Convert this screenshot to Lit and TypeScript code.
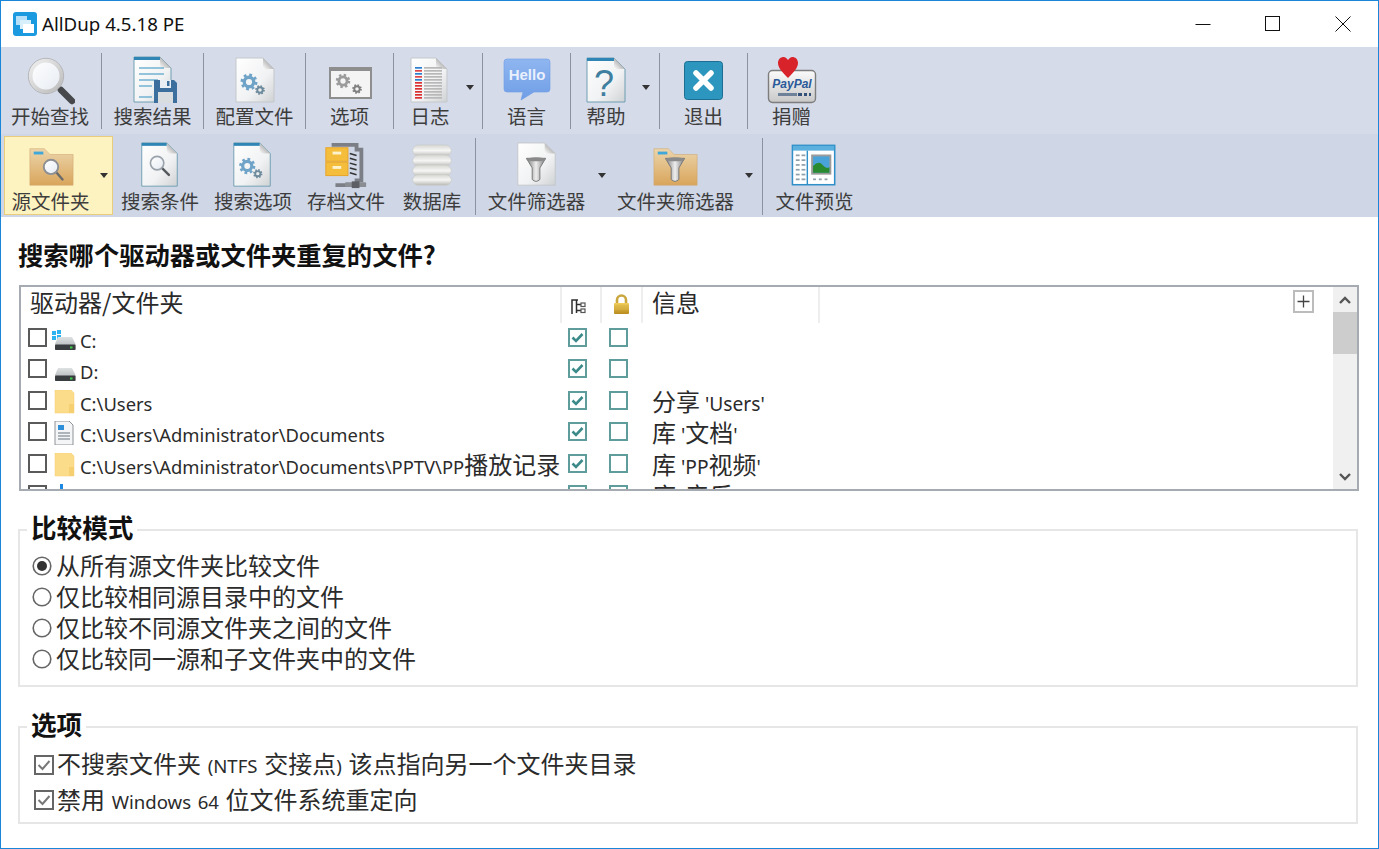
import { LitElement, html, css, svg } from "lit";
import { customElement } from "lit/decorators.js";

const defs = svg`<defs>
  <linearGradient id="pg" x1="0" y1="0" x2="1" y2="1"><stop offset="0" stop-color="#ffffff"/><stop offset="0.6" stop-color="#f1f2f3"/><stop offset="1" stop-color="#cfd2d4"/></linearGradient>
  <linearGradient id="fold" x1="0" y1="1" x2="1" y2="0"><stop offset="0" stop-color="#fff"/><stop offset="1" stop-color="#777"/></linearGradient>
  <linearGradient id="tan" x1="0" y1="0" x2="0" y2="1"><stop offset="0" stop-color="#ecd5ab"/><stop offset="1" stop-color="#d9a55b"/></linearGradient>
  <linearGradient id="glass" x1="0" y1="0" x2="1" y2="1"><stop offset="0" stop-color="#ffffff"/><stop offset="1" stop-color="#e6ebf2"/></linearGradient>
  <linearGradient id="ring" x1="0" y1="0" x2="1" y2="1"><stop offset="0" stop-color="#efefef"/><stop offset="1" stop-color="#bcbcbc"/></linearGradient>
  <linearGradient id="hello" x1="0" y1="0" x2="0" y2="1"><stop offset="0" stop-color="#8fb6f0"/><stop offset="1" stop-color="#6f9de6"/></linearGradient>
  <linearGradient id="disk" x1="0" y1="0" x2="0" y2="1"><stop offset="0" stop-color="#d6d6d3"/><stop offset="0.5" stop-color="#f6f6f5"/><stop offset="1" stop-color="#b9b9b6"/></linearGradient>
  <linearGradient id="gold" x1="0" y1="0" x2="0" y2="1"><stop offset="0" stop-color="#f0cf5a"/><stop offset="1" stop-color="#b98a1d"/></linearGradient>
  <linearGradient id="pp" x1="0" y1="0" x2="0" y2="1"><stop offset="0" stop-color="#fbfbfb"/><stop offset="1" stop-color="#c8c8c8"/></linearGradient>
  <linearGradient id="fun" x1="0" y1="0" x2="1" y2="0"><stop offset="0" stop-color="#777"/><stop offset="0.5" stop-color="#eee"/><stop offset="1" stop-color="#777"/></linearGradient>
  <linearGradient id="drv" x1="0" y1="0" x2="0" y2="1"><stop offset="0" stop-color="#dfe2e3"/><stop offset="1" stop-color="#a9adaf"/></linearGradient>
</defs>`;

const doc = (x: number, y: number, w: number, h: number, band = false) => {
  const f = 11;
  return svg`<path d="M${x} ${y}H${x + w - f}L${x + w} ${y + f}V${y + h}H${x}Z" fill="url(#pg)" stroke="${band ? "#6f9fb2" : "#c4c7cb"}" stroke-width="1"/>
  <path d="M${x + w - f} ${y}V${y + f}H${x + w}Z" fill="url(#fold)"/>
  ${band ? svg`<rect x="${x}" y="${y}" width="${w - f}" height="3" fill="#2f86b5"/>` : ""}`;
};

const gear = (cx: number, cy: number, r: number, c: string) => {
  const circ = 2 * Math.PI * r;
  const d = circ / 16;
  return svg`<circle cx="${cx}" cy="${cy}" r="${r}" fill="none" stroke="${c}" stroke-width="${r * 0.42}" stroke-dasharray="${d} ${d}"/>
  <circle cx="${cx}" cy="${cy}" r="${r * 0.68}" fill="none" stroke="${c}" stroke-width="${r * 0.48}"/>`;
};

const lens = (cx: number, cy: number, r: number) => svg`
  <line x1="${cx + r * 0.7}" y1="${cy + r * 0.7}" x2="${cx + r * 1.75}" y2="${cy + r * 1.75}" stroke="#55585c" stroke-width="${r * 0.36}" stroke-linecap="round"/>
  <circle cx="${cx}" cy="${cy}" r="${r}" fill="url(#glass)" stroke="#9aa3ab" stroke-width="${r * 0.24}"/>`;

const funnel = (cx: number, y: number) => svg`
  <path d="M${cx - 10} ${y}H${cx + 10}L${cx + 4} ${y + 10}V${y + 22}Q${cx} ${y + 26} ${cx - 4} ${y + 22}V${y + 10}Z" fill="url(#fun)" stroke="#777" stroke-width="1"/>
  <ellipse cx="${cx}" cy="${y + 1}" rx="10" ry="2" fill="#8a8a8a"/>`;

const folder = (x: number, y: number, w: number, h: number) => svg`
  <path d="M${x} ${y}H${x + 15}L${x + 21} ${y + 6}H${x + w}V${y + h}H${x}Z" fill="url(#tan)" stroke="#d0a870" stroke-width="0.6"/>
  <rect x="${x + 4}" y="${y + 3}" width="10" height="3" fill="#3fa8d8"/>`;

const icons: Record<string, unknown> = {
  search: svg`<line x1="31" y1="31" x2="36" y2="36" stroke="#9a9a9a" stroke-width="3"/><line x1="36" y1="35" x2="47" y2="46" stroke="#46484b" stroke-width="6.500" stroke-linecap="round"/><circle cx="21" cy="21" r="15.500" fill="url(#glass)" stroke="url(#ring)" stroke-width="4"/><circle cx="21" cy="21" r="17.700" fill="none" stroke="#a8a8a8" stroke-width="0.7"/>`,
  results: svg`${doc(6, 2, 37, 45, true)}
    <g stroke="#5ba7cc" stroke-width="1.3"><line x1="11" y1="13" x2="36" y2="13"/><line x1="11" y1="19" x2="36" y2="19"/><line x1="11" y1="25" x2="30" y2="25"/><line x1="11" y1="31" x2="24" y2="31"/><line x1="11" y1="42" x2="24" y2="42"/></g>
    <path d="M26 25H46L49 28V48H26Z" fill="#3d6f9e"/><rect x="32" y="25" width="11" height="8" fill="#e8eef3"/><rect x="39" y="26" width="2.5" height="5" fill="#3d6f9e"/><rect x="30" y="37" width="15" height="11" fill="#d9dde0"/>`,
  config: svg`${doc(6, 3, 38, 44)}${gear(19, 27, 7, "#6fa3c8")}${gear(30, 35, 4, "#6c8a9c")}`,
  options: svg`<rect x="5" y="13" width="41" height="30" fill="#f4f4f4" stroke="#8e8e8e" stroke-width="2"/><rect x="5" y="13" width="41" height="3" fill="#8e8e8e"/>${gear(18, 26, 6, "#9b9b9b")}${gear(32, 34, 4, "#7f7f7f")}`,
  log: svg`${doc(6, 3, 36, 44)}
    ${[12, 15, 18, 21, 24, 27, 30, 33, 36, 39, 42].map((y, i) => svg`<rect x="10" y="${y}" width="7" height="1.7" fill="${i < 5 && i % 2 === 0 ? "#2c7fd0" : i < 5 ? "#e04848" : "#dc2f2f"}"/><rect x="19" y="${y}" width="18" height="1.7" fill="#b8b8b8"/>`)}`,
  hello: svg`<path d="M5 4H45Q48 4 48 7V34Q48 37 45 37H32L19 45L21 37H5Q2 37 2 34V7Q2 4 5 4Z" fill="url(#hello)" stroke="#6f9de6" stroke-width="0.6"/><text x="25" y="25" text-anchor="middle" class="svgt" font-size="15" font-weight="700" fill="#e9f0fd">Hello</text>`,
  help: svg`${doc(6, 3, 38, 44, true)}<text x="23" y="41" text-anchor="middle" class="svgt" font-size="36" fill="#3f7f9f">?</text>`,
  exit: svg`<rect x="5.5" y="6.5" width="38" height="38" rx="3" fill="#2c96bf" stroke="#1c6f90"/><path d="M17 18L32 33M32 18L17 33" stroke="#fff" stroke-width="5.5" stroke-linecap="round"/>`,
  paypal: svg`<rect x="1.5" y="15.5" width="47" height="32" rx="4" fill="url(#pp)" stroke="#7d7d7d" stroke-width="1.4"/>
    <text x="25" y="33" text-anchor="middle" class="svgt" font-size="12" font-weight="700" font-style="italic" fill="#2a5a9a">PayPal</text>
    <rect x="11" y="38" width="19" height="3" fill="#6d8299"/><rect x="31" y="38" width="4" height="3" fill="#33507a"/><rect x="37" y="38" width="3" height="3" fill="#33507a"/><rect x="42" y="38" width="2" height="3" fill="#33507a"/>
    <path d="M21 23C14 16 11 12 11 8C11 4 14 2 16.500 2C18.500 2 20 3.500 21 5C22 3.500 23.500 2 25.500 2C28 2 31 4 31 8C31 12 28 16 21 23Z" fill="#d8232a"/>`,
  srcFolder: svg`${folder(3, 7, 45, 38)}<line x1="30" y1="31" x2="37" y2="39" stroke="#6a6a6a" stroke-width="2.5" stroke-linecap="round"/><circle cx="25" cy="26" r="7.5" fill="url(#glass)" stroke="#8c8f93" stroke-width="2"/>`,
  criteria: svg`${doc(6, 1, 37, 45, true)}${lens(22, 22, 7)}`,
  searchOpt: svg`${doc(5, 1, 38, 45, true)}${gear(19, 25, 7, "#6fa3c8")}${gear(30, 33, 4, "#6c8a9c")}`,
  archive: svg`<path d="M10 3H36V8H41V40H36V45H14" fill="none" stroke="#7c7f85" stroke-width="4"/>
    <g stroke="#333" stroke-width="1.6"><line x1="29" y1="12" x2="36" y2="14"/><line x1="29" y1="17" x2="36" y2="19"/><line x1="29" y1="22" x2="36" y2="24"/><line x1="29" y1="27" x2="36" y2="29"/><line x1="29" y1="32" x2="36" y2="34"/></g>
    <rect x="4" y="6" width="23" height="14" fill="#f4be3c" stroke="#e9a425"/><rect x="4" y="21" width="23" height="14" fill="#f4be3c" stroke="#e9a425"/>
    <rect x="11" y="10" width="9" height="3" fill="#fff3cd"/><rect x="11" y="25" width="9" height="3" fill="#fff3cd"/>
    <rect x="24" y="42" width="22" height="5" rx="1" fill="#8a8d92"/><rect x="31" y="41" width="8" height="7" fill="#5c5f64"/>`,
  db: svg`<rect x="5" y="3" width="40" height="12" rx="6" fill="url(#disk)" stroke="#c9c9c6" stroke-width="0.6"/><rect x="5" y="13.500" width="40" height="12" rx="6" fill="url(#disk)" stroke="#c9c9c6" stroke-width="0.6"/><rect x="5" y="24" width="40" height="12" rx="6" fill="url(#disk)" stroke="#c9c9c6" stroke-width="0.6"/><rect x="5" y="34" width="40" height="11" rx="5.500" fill="url(#disk)" stroke="#c9c9c6" stroke-width="0.6"/>`,
  fileFilter: svg`${doc(5, 1, 39, 44)}${funnel(24, 17)}`,
  folderFilter: svg`${folder(2, 7, 45, 38)}${funnel(24, 17)}`,
  preview: svg`<rect x="1.5" y="3.5" width="44" height="41" fill="#fff" stroke="#2f8fc8" stroke-width="1.6"/><rect x="2" y="4" width="43" height="5" fill="#5cb0de"/><line x1="17" y1="9" x2="17" y2="44" stroke="#2f8fc8" stroke-width="1.5"/>
    ${[13, 18, 23, 28, 33, 38].map((y) => svg`<rect x="5" y="${y}" width="4" height="1.800" fill="#8fa0ad"/><rect x="11" y="${y}" width="4" height="1.800" fill="#8fa0ad"/>`)}
    <rect x="21" y="13" width="21" height="21" fill="#9b9b9b"/><rect x="23" y="15" width="17" height="17" fill="#4aa3d8"/><path d="M23 32V25Q29 19 33 24T40 26V32Z" fill="#2a8a2f"/>
    <rect x="23" y="38" width="3" height="1.800" fill="#8fa0ad"/><rect x="29" y="38" width="3" height="1.800" fill="#8fa0ad"/><rect x="35" y="38" width="3" height="1.800" fill="#8fa0ad"/>`,
};

type Btn = { label: string; icon: string; w: number; dropW?: number; dropMl?: number; active?: boolean; sepAfter?: boolean; sepMl?: number };

const row1: Btn[] = [
  { label: "开始查找", icon: "search", w: 98, sepAfter: true, sepMl: 2 },
  { label: "搜索结果", icon: "results", w: 101, sepAfter: true },
  { label: "配置文件", icon: "config", w: 101, sepAfter: true },
  { label: "选项", icon: "options", w: 87, sepAfter: true },
  { label: "日志", icon: "log", w: 72, dropW: 16, dropMl: 0, sepAfter: true },
  { label: "语言", icon: "hello", w: 87, sepAfter: true },
  { label: "帮助", icon: "help", w: 70, dropW: 18, dropMl: 1, sepAfter: true },
  { label: "退出", icon: "exit", w: 87, sepAfter: true },
  { label: "捐赠", icon: "paypal", w: 87 },
];
const row2: Btn[] = [
  { label: "源文件夹", icon: "srcFolder", w: 92, dropW: 17, dropMl: 4, active: true },
  { label: "搜索条件", icon: "criteria", w: 94 },
  { label: "搜索选项", icon: "searchOpt", w: 92 },
  { label: "存档文件", icon: "archive", w: 94 },
  { label: "数据库", icon: "db", w: 78, sepAfter: true, sepMl: 4 },
  { label: "文件筛选器", icon: "fileFilter", w: 120, dropW: 16, dropMl: 2 },
  { label: "文件夹筛选器", icon: "folderFilter", w: 126, dropW: 24, dropMl: 7, sepAfter: true },
  { label: "文件预览", icon: "preview", w: 103 },
];

const driveBody = svg`<path d="M6 10H20L23.500 17V23H3V17Z" fill="url(#drv)"/><rect x="3" y="17.500" width="20.500" height="5.500" rx="1" fill="#3a3d40"/><rect x="18" y="19.500" width="2.500" height="2" fill="#39d04a"/>`;
const tallFolder = svg`<path d="M3 0H19L22 3V23H3Z" fill="#fbdc8a" stroke="#f5cf70" stroke-width="0.5"/><rect x="17" y="14" width="5" height="9" fill="#f5cf70"/>`;
const rowIcons: Record<string, unknown> = {
  c: svg`<g fill="#2db4f0"><rect x="0" y="4" width="4" height="4"/><rect x="5" y="3" width="4" height="4"/><rect x="0" y="9" width="4" height="4"/><rect x="5" y="8" width="4" height="4"/></g>${driveBody}`,
  d: driveBody,
  folder: tallFolder,
  docs: svg`<path d="M3 0H17L21 4V24H3Z" fill="#f4f5f6" stroke="#8e9296"/><rect x="6" y="4" width="6" height="5" fill="#2f8fd8"/><g stroke="#7e8a94" stroke-width="1.200"><line x1="6" y1="12" x2="18" y2="12"/><line x1="6" y1="15" x2="18" y2="15"/><line x1="6" y1="18" x2="18" y2="18"/></g>`,
  music: svg`<path d="M11 0V16A4 4 0 1 1 8 12V0Z" fill="#1e88e5"/>`,
};

type Row = { icon: string; path: string; info?: string };
const rows: Row[] = [
  { icon: "c", path: "C:" },
  { icon: "d", path: "D:" },
  { icon: "folder", path: "C:\\Users", info: "分享 'Users'" },
  { icon: "docs", path: "C:\\Users\\Administrator\\Documents", info: "库 '文档'" },
  { icon: "folder", path: "C:\\Users\\Administrator\\Documents\\PPTV\\PP播放记录", info: "库 'PP视频'" },
  { icon: "music", path: "C:\\Users\\Administrator\\Music", info: "库 '音乐'" },
];

const mixed = (s: string) =>
  s.split(/([\u3000-\u9fff]+)/).filter(Boolean).map((p) =>
    /[\u3000-\u9fff]/.test(p) ? html`<span class="cjk">${p}</span>` : html`<span class="lat">${p}</span>`
  );

@customElement("app-root")
export class AppRoot extends LitElement {
  static styles = css`
    :host { display: block; width: 1379px; height: 849px; box-sizing: border-box; border: 1px solid #1a86d9; background: #fff; overflow: hidden; font-family: "Noto Sans", "Noto Sans CJK SC", sans-serif; color: #222; }
    .svgt { font-family: "Liberation Sans", sans-serif; }
    .title { height: 46px; display: flex; align-items: center; }
    .appicon { margin-left: 12px; width: 24px; height: 24px; flex: none; }
    .appname { margin-left: 5px; font-size: 18.7px; color: #111; white-space: nowrap; position: relative; top: -1px; }
    .winbtns { margin-left: auto; display: flex; }
    .winbtn { width: 70px; height: 46px; display: flex; align-items: center; justify-content: center; }
    .tb { display: flex; font-family: "Noto Sans CJK SC", sans-serif; color: #3d3d3d; }
    .tb1 { height: 87px; background: #d5dbe9; }
    .tb2 { height: 83px; background: #cfd7e6; padding-left: 3px; align-items: flex-start; }
    .btn { display: flex; flex: none; box-sizing: border-box; }
    .tb1 .btn { height: 87px; padding-top: 8px; }
    .tb2 .btn { height: 79px; margin-top: 2px; padding-top: 5px; border: 1px solid transparent; }
    .tb2 .btn.active { background: #fdf3c0; border-color: #eacd7c; }
    .main { display: flex; flex-direction: column; align-items: center; flex: none; }
    .main svg { width: 50px; height: 50px; flex: none; }
    .tb2 .main svg { height: 48px; width: 50px; }
    .lbl { font-size: 19.5px; white-space: nowrap; text-align: center; margin-top: -1px; }
    .tb1 .lbl { line-height: 23px; height: 23px; }
    .tb2 .lbl { line-height: 24px; height: 24px; }
    .drop { flex: none; box-sizing: border-box; }
    .arrow { width: 0; height: 0; border-left: 4.5px solid transparent; border-right: 4.5px solid transparent; border-top: 5px solid #333; }
    .tb1 .arrow { margin-top: 30px; }
    .tb2 .arrow { margin-top: 31px; }
    .sep { width: 1px; flex: none; background: #8b93a3; }
    .tb1 .sep { margin-top: 6px; margin-bottom: 5px; }
    .tb2 .sep { margin-top: 4px; height: 77px; }
    .content { padding: 0 19px 0 17px; }
    h2 { margin: 20px 0 14px; font-size: 25.3px; line-height: 34px; font-weight: 700; font-family: "Noto Sans CJK SC", sans-serif; color: #111; white-space: nowrap; }
    .listbox { margin-left: 1px; height: 206px; box-sizing: border-box; border: 2px solid #a6abb2; display: flex; background: #fff; }
    .listmain { flex: 1; min-width: 0; overflow: hidden; }
    .lhead { height: 36px; display: flex; align-items: stretch; font-size: 24px; line-height: 30px; font-family: "Noto Sans CJK SC", sans-serif; color: #2a2a2a; }
    .hc { box-sizing: border-box; border-right: 2px solid #eeeeee; display: flex; align-items: center; flex: none; white-space: nowrap; }
    .hc0 { width: 541px; padding-left: 9px; padding-bottom: 6px; }
    .hc1 { width: 40px; padding-left: 9px; padding-top: 2px; }
    .hc2 { width: 41px; padding-left: 11px; padding-bottom: 2px; }
    .hc3 { width: 177px; padding-left: 9px; padding-bottom: 6px; }
    .hc svg { flex: none; }
    .plus { margin: 3px 19px 0 auto; width: 21px; height: 23px; flex: none; box-sizing: border-box; border: 2px solid #bcbcbc; display: flex; align-items: center; justify-content: center; }
    .row { height: 31.5px; display: flex; align-items: center; white-space: nowrap; }
    .c0 { width: 540px; display: flex; align-items: center; flex: none; padding-left: 7px; box-sizing: border-box; }
    .box { width: 19px; height: 19px; box-sizing: border-box; border: 2px solid #5a5a5a; flex: none; margin-top: -3px; }
    .ricon { width: 24px; height: 24px; margin-left: 5px; margin-right: 4px; flex: none; }
    .path { color: #2b2b2b; position: relative; top: -1px; font: 24px/24px "Noto Sans CJK SC", sans-serif; display: block; height: 24px; }
    .cjk { font-size: 24px; line-height: 24px; font-family: "Noto Sans CJK SC", sans-serif; }
    .lat { font-size: 18.6px; line-height: 24px; font-family: "Noto Sans", "Noto Sans CJK SC", sans-serif; }
    .path .lat { font-size: 18.4px; }
    .c1 { width: 41px; flex: none; padding-left: 7px; box-sizing: border-box; }
    .c2 { width: 41px; flex: none; padding-left: 7px; box-sizing: border-box; }
    .c3 { padding-left: 9px; color: #2b2b2b; font: 24px/24px "Noto Sans CJK SC", sans-serif; height: 24px; position: relative; top: -1px; }
    .c3 .lat { font-size: 19.2px; }
    .tick { width: 19px; height: 19px; display: block; margin-top: -3px; }
    .scroll { width: 24px; flex: none; background: #f0f0f0; display: flex; flex-direction: column; align-items: center; }
    .sarrow { width: 100%; height: 25px; display: flex; align-items: center; justify-content: center; flex: none; }
    .thumb { width: 100%; height: 42px; background: #cdcdcd; flex: none; }
    .strack { flex: 1; }
    fieldset { margin: 24px 1px 0 0; padding: 0 0 0 12px; border: 2px solid #e6e6e6; min-width: 0; }
    legend { margin-left: -5px; padding: 0 4px; height: 30px; line-height: 24px; font-size: 25.6px; font-weight: 700; font-family: "Noto Sans CJK SC", sans-serif; color: #111; }
    .f1 { height: 172px; box-sizing: border-box; }
    .f2 { height: 112px; box-sizing: border-box; margin-top: 25px; }
    .radio { height: 31px; display: flex; align-items: center; white-space: nowrap; color: #2b2b2b; }
    .f1 .list { padding-top: 4px; }
    .rsvg { width: 20px; height: 20px; margin: 2px 4px 0 0; flex: none; }
    .f2 .list { padding-top: 5px; }
    .opt { height: 35.5px; display: flex; align-items: center; white-space: nowrap; color: #2b2b2b; }
    .opt .lat { word-spacing: 1.8px; }
    .csvg { width: 20px; height: 20px; margin: 0 3px 0 2px; flex: none; }
  `;

  private renderBtn(b: Btn, bordered: boolean) {
    const hasDrop = b.dropW !== undefined;
    const mainW = bordered ? b.w - (hasDrop ? 1 : 2) : b.w;
    const dropW = (b.dropW ?? 0) - (bordered ? 1 : 0);
    return html`<div class="btn ${b.active ? "active" : ""}">
        <div class="main" style="width:${mainW}px">
          <svg viewBox="0 0 50 50">${icons[b.icon]}</svg>
          <div class="lbl">${b.label}</div>
        </div>
        ${hasDrop
          ? html`<div class="drop" style="width:${dropW}px;padding-left:${b.dropMl}px"><div class="arrow"></div></div>`
          : ""}
      </div>
      ${b.sepAfter ? html`<div class="sep" style="margin-left:${b.sepMl ?? 0}px"></div>` : ""}`;
  }

  private tick() {
    return html`<svg class="tick" viewBox="0 0 19 19"><rect x="1" y="1" width="17" height="17" fill="#fff" stroke="#5f9c9c" stroke-width="2"/><path d="M4.500 9.500L8 13L14.500 6" fill="none" stroke="#3d8a8a" stroke-width="2.600"/></svg>`;
  }
  private untick() {
    return html`<svg class="tick" viewBox="0 0 19 19"><rect x="1" y="1" width="17" height="17" fill="#fff" stroke="#5f9c9c" stroke-width="2"/></svg>`;
  }

  private radio(on: boolean, text: string) {
    return html`<div class="radio">
      <svg class="rsvg" viewBox="0 0 20 20"><circle cx="10" cy="10" r="8.8" fill="#fff" stroke="#666" stroke-width="1.600"/>${on ? svg`<circle cx="10" cy="10" r="5" fill="#333"/>` : ""}</svg>
      <span class="cjk">${text}</span>
    </div>`;
  }

  private option(text: string) {
    return html`<div class="opt">
      <svg class="csvg" viewBox="0 0 20 20"><rect x="1" y="1" width="18" height="18" fill="#fff" stroke="#666" stroke-width="2"/><path d="M4.500 10L8.500 14L15.500 6" fill="none" stroke="#777" stroke-width="2"/></svg>
      <span>${mixed(text)}</span>
    </div>`;
  }

  render() {
    return html`
      <div class="title">
        <svg class="appicon" viewBox="0 0 24 24"><rect width="24" height="24" rx="3" fill="#1c9ae0"/><rect x="3" y="4" width="11" height="9" fill="#b5e0f7"/><rect x="7" y="8" width="11" height="9" fill="#d6effb"/><rect x="10" y="12" width="11" height="9" fill="#fff"/></svg>
        <div class="appname">AllDup 4.5.18 PE</div>
        <div class="winbtns">
          <div class="winbtn"><svg width="16" height="16" viewBox="0 0 16 16"><line x1="0.500" y1="8.500" x2="15.500" y2="8.500" stroke="#111"/></svg></div>
          <div class="winbtn"><svg width="16" height="16" viewBox="0 0 16 16"><rect x="0.500" y="0.500" width="14" height="14" fill="none" stroke="#111"/></svg></div>
          <div class="winbtn"><svg width="16" height="16" viewBox="0 0 16 16"><path d="M0.500 0.500L15.500 15.500M15.500 0.500L0.500 15.500" stroke="#111" fill="none"/></svg></div>
        </div>
      </div>
      <div class="tb tb1">${row1.map((b) => this.renderBtn(b, false))}</div>
      <div class="tb tb2"><svg width="0" height="0" style="position:absolute">${defs}</svg>${row2.map((b) => this.renderBtn(b, true))}</div>
      <div class="content">
        <h2>搜索哪个驱动器或文件夹重复的文件?</h2>
        <div class="listbox">
          <div class="listmain">
            <div class="lhead">
              <div class="hc hc0">驱动器/文件夹</div>
              <div class="hc hc1"><svg width="17" height="17" viewBox="0 0 17 17"><path d="M1 16V2H7M5.500 2V15M5.500 6.500H10M5.500 12.500H10" fill="none" stroke="#2e2e2e" stroke-width="1.500"/><rect x="10" y="5" width="4" height="3.500" fill="#fff" stroke="#555" stroke-width="1.200"/><rect x="10" y="11" width="4" height="3.500" fill="#fff" stroke="#555" stroke-width="1.200"/></svg></div>
              <div class="hc hc2"><svg width="17" height="21" viewBox="0 0 17 21"><path d="M4 10V6A4.500 4.500 0 0 1 13 6V10" fill="none" stroke="#c9a63e" stroke-width="2.600"/><rect x="1" y="9" width="15" height="11" rx="1" fill="url(#gold)"/><path d="M1 12H16M1 15H16" stroke="#d9b64a" stroke-width="0.800"/></svg></div>
              <div class="hc hc3">信息</div>
              <div class="plus"><svg width="13" height="13" viewBox="0 0 13 13"><path d="M6.500 0.500V12.500M0.500 6.500H12.500" stroke="#444" stroke-width="1.300"/></svg></div>
            </div>
            ${rows.map(
              (r) => html`<div class="row">
                <div class="c0">
                  <div class="box"></div>
                  <svg class="ricon" viewBox="0 0 24 24">${rowIcons[r.icon]}</svg>
                  <span class="path">${mixed(r.path)}</span>
                </div>
                <div class="c1">${this.tick()}</div>
                <div class="c2">${this.untick()}</div>
                <div class="c3">${r.info ? mixed(r.info) : ""}</div>
              </div>`
            )}
          </div>
          <div class="scroll">
            <div class="sarrow"><svg width="12" height="8" viewBox="0 0 12 8"><path d="M1 7L6 2L11 7" fill="none" stroke="#555" stroke-width="2.400"/></svg></div>
            <div class="thumb"></div>
            <div class="strack"></div>
            <div class="sarrow"><svg width="12" height="8" viewBox="0 0 12 8"><path d="M1 1L6 6L11 1" fill="none" stroke="#555" stroke-width="2.400"/></svg></div>
          </div>
        </div>
        <fieldset class="f1">
          <legend>比较模式</legend>
          <div class="list">
            ${this.radio(true, "从所有源文件夹比较文件")}
            ${this.radio(false, "仅比较相同源目录中的文件")}
            ${this.radio(false, "仅比较不同源文件夹之间的文件")}
            ${this.radio(false, "仅比较同一源和子文件夹中的文件")}
          </div>
        </fieldset>
        <fieldset class="f2">
          <legend>选项</legend>
          <div class="list">
            ${this.option("不搜索文件夹 (NTFS 交接点) 该点指向另一个文件夹目录")}
            ${this.option("禁用 Windows 64 位文件系统重定向")}
          </div>
        </fieldset>
      </div>
    `;
  }
}
